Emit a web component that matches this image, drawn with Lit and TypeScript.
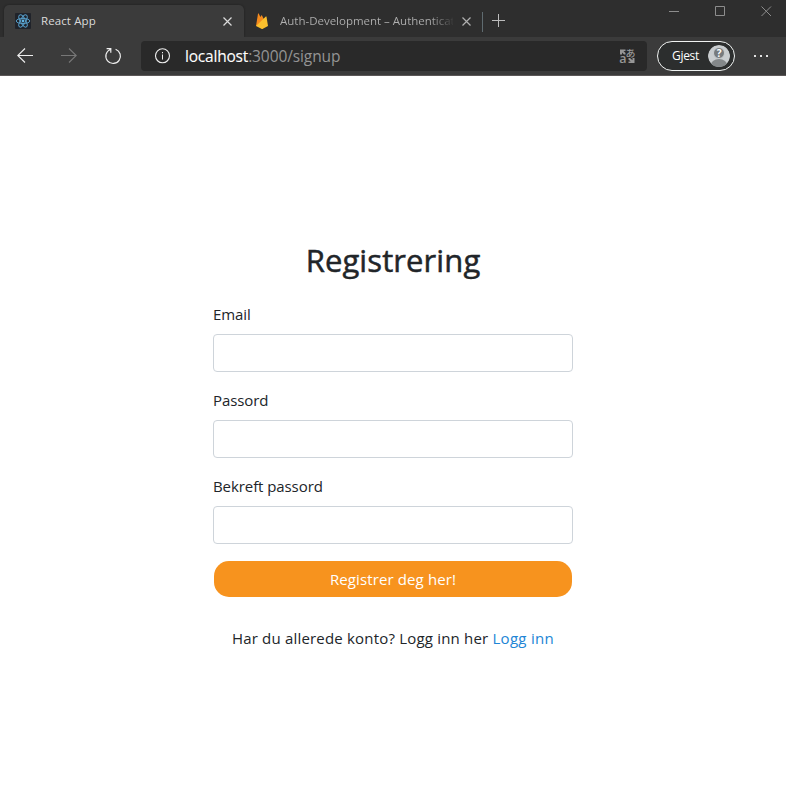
import { LitElement, html, css } from "lit";
import { customElement, property } from "lit/decorators.js";

const closeIcon = html`<svg width="9" height="9" viewBox="0 0 9 9" fill="none" stroke="currentColor" stroke-width="1.2"><path d="M.5.5 8.500 8.500M8.500.5.5 8.500" /></svg>`;

@customElement("browser-tabs")
export class BrowserTabs extends LitElement {
  static styles = css`
    :host { display: flex; height: 37px; background: #2e2e2e; box-sizing: border-box; padding-left: 4px; font: 12px/16px "Open Sans", sans-serif; color: #b0b0b0; }
    svg { display: block; flex: none; }
    .tab { box-sizing: border-box; display: flex; align-items: center; height: 32px; margin-top: 5px; }
    .active { width: 240px; padding: 0 12px 0 11px; background: #3b3b3b; border-radius: 5px 5px 0 0; color: #dadada; box-shadow: 0 0 2px #1c1c1c; }
    .idle { width: 238px; padding: 0 11px 0 10px; }
    .title { margin-left: 10px; white-space: nowrap; font-size: 11.5px; }
    .active .title { flex: 1; letter-spacing: 0.1px; }
    .idle .title { width: 173px; margin-right: 9px; letter-spacing: -0.01px; background: linear-gradient(90deg, #b0b0b0 150px, #3a3a3a 173px); -webkit-background-clip: text; background-clip: text; color: transparent; }
    .sep { width: 1px; height: 20px; margin-top: 12px; background: #5f6b70; }
    .plus { margin: 14px 0 0 9px; }
    .window { display: flex; margin-left: auto; padding: 6px 14px 0 0; gap: 35px; color: #8d8d8d; }
  `;
  render() {
    return html`
      <div class="tab active">
        <svg width="16" height="16" viewBox="0 0 16 16"><rect width="16" height="16" rx="1" fill="#20232a" />
          <g fill="none" stroke="#569dc8" stroke-width="1"><ellipse cx="8" cy="8" rx="6.8" ry="2.6" /><ellipse cx="8" cy="8" rx="6.8" ry="2.6" transform="rotate(60 8 8)" /><ellipse cx="8" cy="8" rx="6.8" ry="2.6" transform="rotate(120 8 8)" /></g>
          <circle cx="8" cy="8" r="1.4" fill="#61b5e5" /></svg>
        <span class="title">React App</span>${closeIcon}
      </div>
      <div class="tab idle">
        <svg width="16" height="16" viewBox="0 0 16 16"><path d="M2 13 4 .7c.1-.4.5-.4.7-.1L6.4 4l.9-1.500c.2-.3.5-.3.7 0L13 12.500Z" fill="#f58a1d" /><path d="M2 13 11.800 3.600c.3-.3.7-.1.7.2L14 13l-5.100 2.800c-.5.3-1 .3-1.500 0Z" fill="#fbc02d" /></svg>
        <span class="title">Auth-Development – Authenticat</span>${closeIcon}
      </div>
      <div class="sep"></div>
      <svg class="plus" width="13" height="13" viewBox="0 0 13 13" stroke="#bcbcbc"><path d="M0 6.5H13M6.5 0V13" /></svg>
      <div class="window">
        <svg width="11" height="11" viewBox="0 0 11 11" stroke="currentColor"><path d="M0 5.5H10" /></svg>
        <svg width="11" height="11" viewBox="0 0 11 11" stroke="currentColor" fill="none"><path d="M.5.5H9.5V9.5H.5Z" /></svg>
        <svg width="11" height="11" viewBox="0 0 11 11" stroke="currentColor"><path d="M.5.5 10 10M10 .5 .5 10" /></svg>
      </div>`;
  }
}

@customElement("browser-toolbar")
export class BrowserToolbar extends LitElement {
  static styles = css`
    :host { display: flex; align-items: center; height: 39px; box-sizing: border-box; padding: 0 17px 1px; background: #3b3b3b; border-bottom: 1px solid #5b5757; font-family: "Open Sans", sans-serif; }
    svg { display: block; flex: none; overflow: visible; }
    .fwd { margin-left: 28px; color: #777; }
    .reload { margin-left: 27px; }
    .address { box-sizing: border-box; display: flex; align-items: center; width: 506px; height: 30px; margin-left: 19px; padding: 0 10px 0 13px; border-radius: 4px; background: #292929; }
    .url { flex: 1; margin-left: 14px; font-size: 15.5px; line-height: 22px; color: #949494; letter-spacing: -0.1px; }
    .host { color: #fff; letter-spacing: -0.2px; -webkit-text-stroke: 0.1px #fff; }
    .profile { box-sizing: border-box; display: flex; align-items: center; justify-content: space-between; width: 78px; height: 30px; margin-left: 10px; padding: 0 4px 0 14px; border: 1px solid #f0f3f2; border-radius: 15px; background: #2c2e2e; color: #fff; font-size: 12px; letter-spacing: -0.3px; }
    .more { margin-left: 18px; }
    .nav { color: #eee; }
  `;
  render() {
    return html`
      <svg class="nav" width="16" height="16" viewBox="0 0 16 16" fill="none" stroke="currentColor" stroke-width="1.1"><path d="M16 7.500H1M8 .5 .8 7.500 8 14.500" /></svg>
      <svg class="fwd" width="16" height="16" viewBox="0 0 16 16" fill="none" stroke="currentColor" stroke-width="1.1"><path d="M0 7.500H15M8 .5 15.200 7.500 8 14.500" /></svg>
      <svg class="reload nav" width="18" height="18" viewBox="0 0 18 18" fill="none" stroke="currentColor" stroke-width="1.2"><path d="M11.600 2.300A7.300 7.300 0 1 1 6.200 2.500M2.600 1.600H6.800V5.700" /></svg>
      <div class="address">
        <svg class="nav" width="17" height="16" viewBox="0 0 17 16"><circle cx="8.500" cy="7.800" r="7" fill="none" stroke="currentColor" stroke-width="1.1" /><path d="M8 6.500h1v5H8ZM8 4h1v1.300H8Z" fill="currentColor" /></svg>
        <span class="url"><span class="host">localhost</span>:3000/signup</span>
        <svg width="19" height="20" viewBox="0 0 19 20" fill="#969696"><path d="M2 3.500H7.500V5H5.500L7.500 7V8.500H6L4 6.500V8.500H2ZM16.500 17h-6v-1.500h2.200L10.500 13.500V12H12l2.500 2.300V12h2Z" /><text x="7.500" y="10.500" font-size="10" font-weight="500" font-family="Noto Sans CJK JP, sans-serif">あ</text><text x="1.300" y="17.200" font-size="12.500" font-weight="600" font-family="Open Sans, sans-serif">a</text></svg>
      </div>
      <div class="profile"><span>Gjest</span>
        <svg width="22" height="22" viewBox="0 0 22 22"><defs><clipPath id="c"><circle cx="11" cy="11" r="11" /></clipPath></defs><g clip-path="url(#c)"><circle cx="11" cy="11" r="11" fill="#c9cdcf" /><ellipse cx="11" cy="21" rx="8.500" ry="7" fill="#84888a" /><circle cx="11" cy="8" r="5.500" fill="#777b7d" stroke="#c9cdcf" /><text x="11" y="11.600" text-anchor="middle" font-size="10" font-weight="700" font-family="Open Sans, sans-serif" fill="#fff">?</text></g></svg>
      </div>
      <svg class="more" width="16" height="4" viewBox="0 0 16 4" fill="#e3e3e3"><path d="M1 1h2v2H1ZM7 1h2v2H7ZM13 1h2v2h-2Z" /></svg>`;
  }
}

@customElement("form-field")
export class FormField extends LitElement {
  @property() label = "";
  @property() type = "text";
  static styles = css`
    :host { display: block; margin-bottom: 16px; }
    label { display: block; height: 24px; line-height: 24px; margin-bottom: 8px; letter-spacing: -0.08px; }
    input { display: block; box-sizing: border-box; width: 100%; height: 38px; padding: 6px 12px; border: 1px solid #ced4da; border-radius: 4px; background: #fff; font: inherit; outline: none; }
  `;
  render() {
    return html`<label for="field">${this.label}</label><input id="field" type=${this.type} />`;
  }
}

@customElement("app-root")
export class AppRoot extends LitElement {
  static styles = css`
    :host { display: flex; flex-direction: column; height: 793px; overflow: hidden; background: #fff; color: #212529; font-family: "Open Sans", sans-serif; font-size: 15px; line-height: 24px; }
    main { width: 360px; margin: 0 auto; padding-top: 166px; }
    h2 { margin: 0 0 22px; height: 38px; line-height: 37px; font-size: 31px; font-weight: 500; text-align: center; letter-spacing: 0.1px; -webkit-text-stroke: 0.5px #212529; }
    button { display: block; width: 358px; height: 36px; margin: 17px 1px 0; padding: 0; border: 0; border-radius: 15px; background: #f7931e; color: #fff; font: inherit; letter-spacing: 0.12px; }
    p { margin: 29px 0 0; text-align: center; white-space: nowrap; letter-spacing: 0.19px; }
    a { color: #2185d5; text-decoration: none; letter-spacing: 0.3px; }
  `;
  render() {
    return html`
      <browser-tabs></browser-tabs>
      <browser-toolbar></browser-toolbar>
      <main>
        <h2>Registrering</h2>
        <form-field label="Email" type="email"></form-field>
        <form-field label="Passord" type="password"></form-field>
        <form-field label="Bekreft passord" type="password"></form-field>
        <button type="button">Registrer deg her!</button>
        <p>Har du allerede konto? Logg inn her <a href="#">Logg inn</a></p>
      </main>`;
  }
}
